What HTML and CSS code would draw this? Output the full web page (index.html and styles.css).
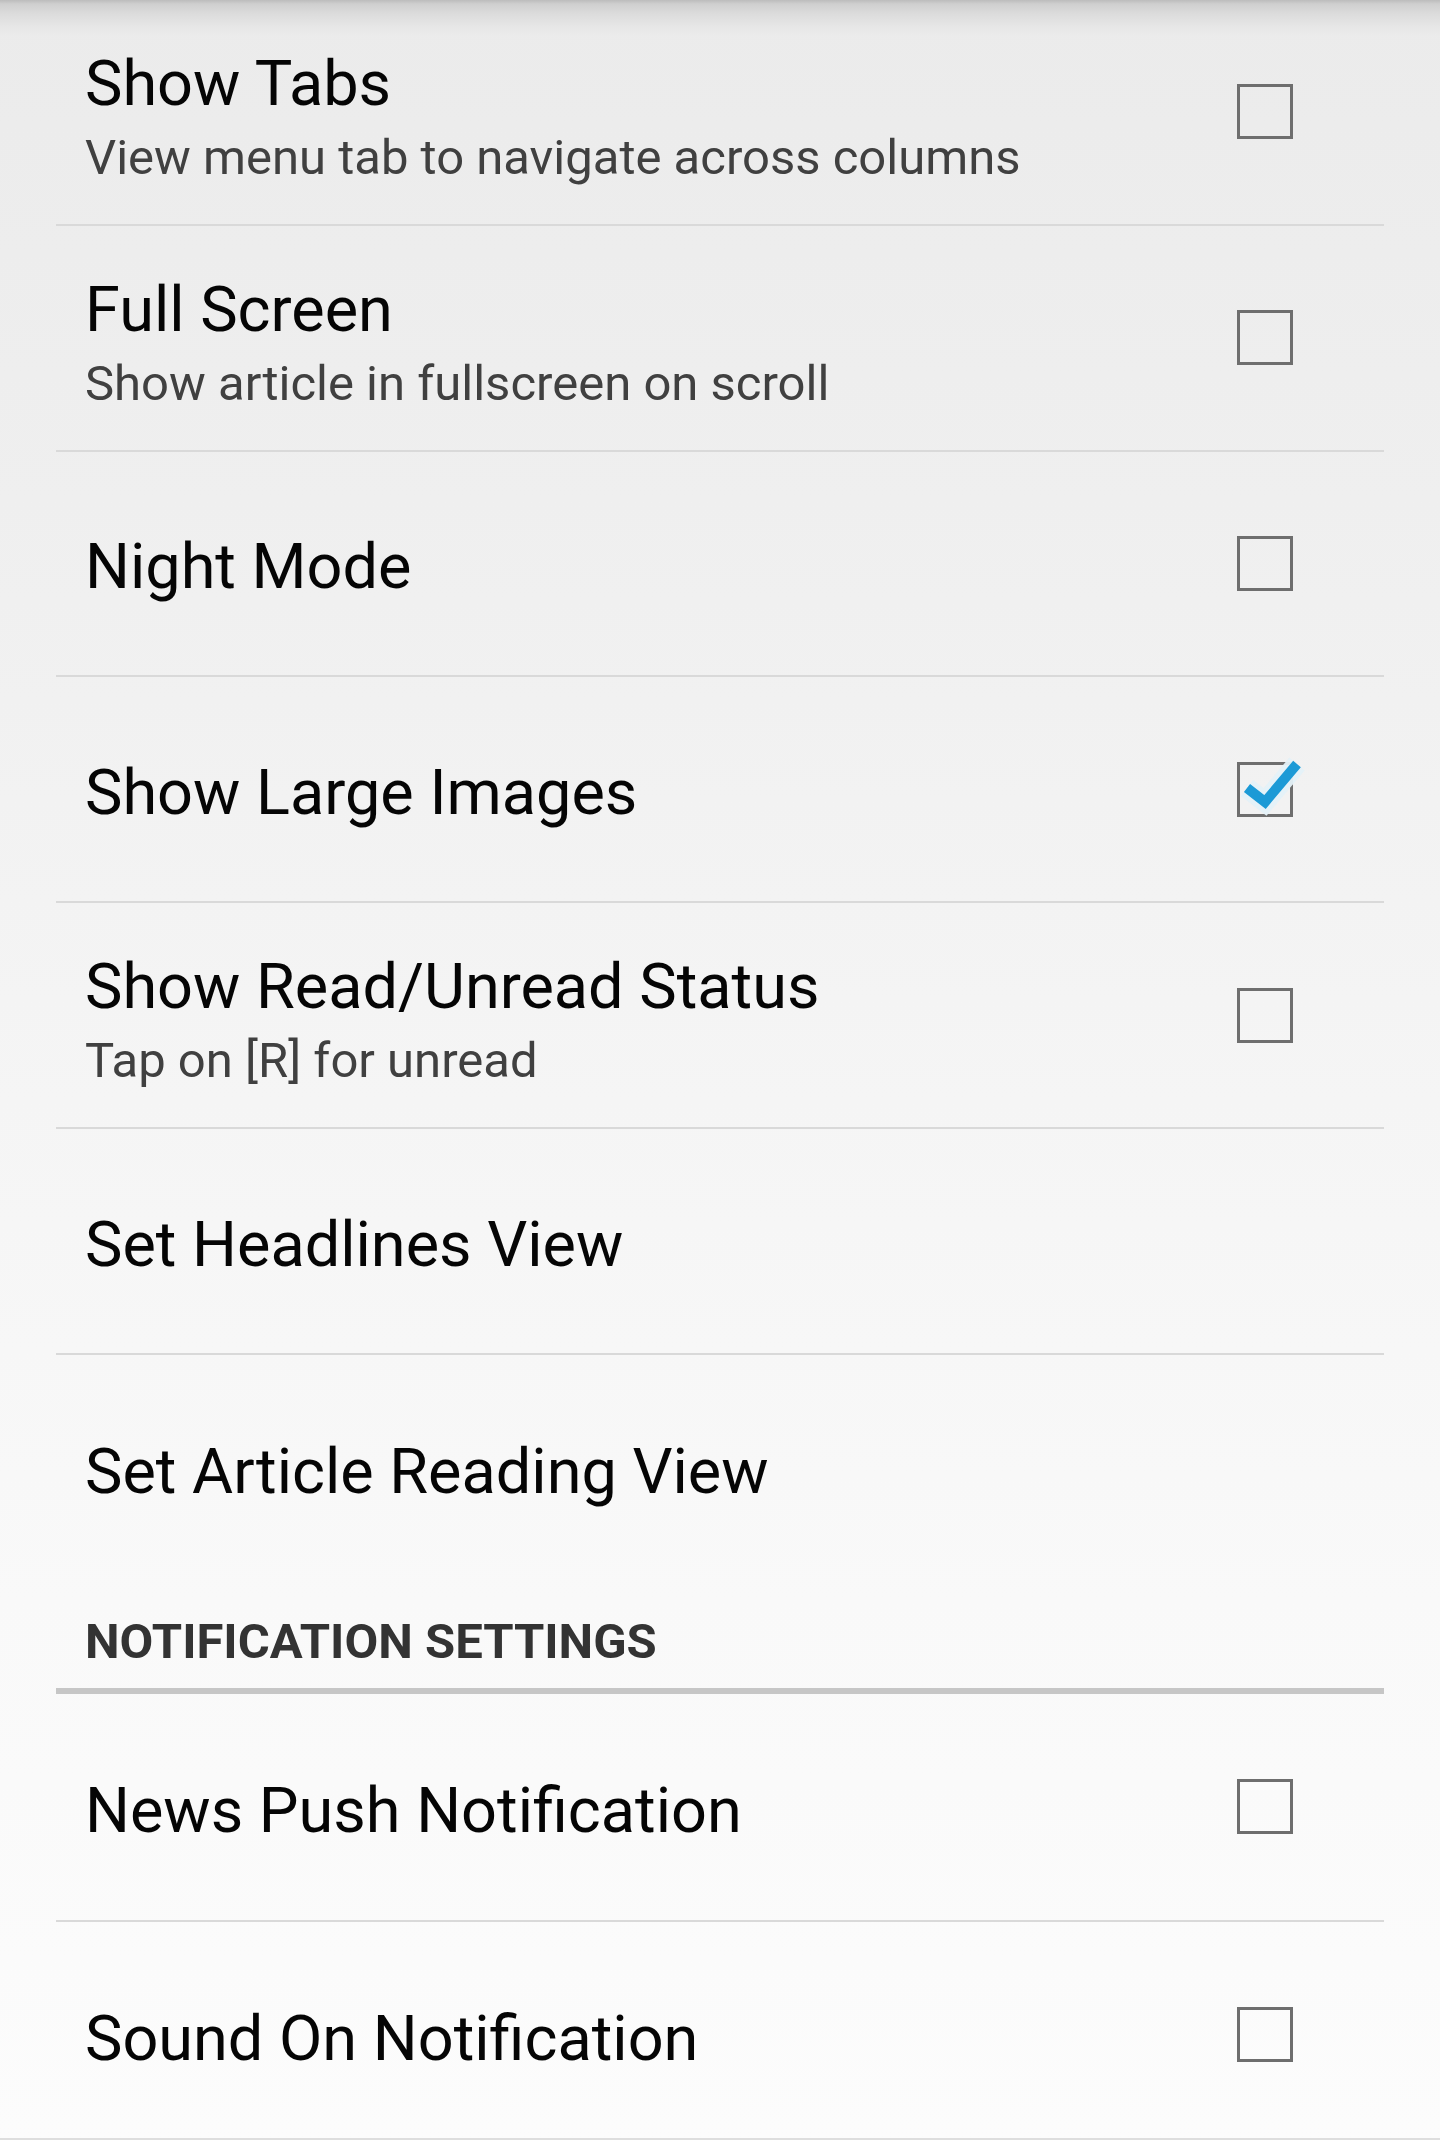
FILE: index.html
```html
<!DOCTYPE html>
<html lang="en">
<head>
<meta charset="utf-8">
<title>Settings</title>
<link rel="stylesheet" href="styles.css">
</head>
<body>
<div class="screen">
  <div class="top-shadow"></div>
  <ul class="list">
    <li class="row">
      <div class="text two">
        <div class="title">Show Tabs</div>
        <div class="summary">View menu tab to navigate across columns</div>
      </div>
      <span class="box"></span>
    </li>
    <li class="row">
      <div class="text two">
        <div class="title">Full Screen</div>
        <div class="summary">Show article in fullscreen on scroll</div>
      </div>
      <span class="box"></span>
    </li>
    <li class="row">
      <div class="text"><div class="title">Night Mode</div></div>
      <span class="box"></span>
    </li>
    <li class="row">
      <div class="text"><div class="title">Show Large Images</div></div>
      <span class="box checked">
        <svg class="tick" width="56" height="56" viewBox="0 0 56 56" aria-hidden="true">
          <polyline class="tick-halo" points="10,26 28,40 60,2"/>
          <polyline class="tick-mark" points="10,26 28,40 60,2"/>
        </svg>
      </span>
    </li>
    <li class="row">
      <div class="text two">
        <div class="title">Show Read/Unread Status</div>
        <div class="summary">Tap on [R] for unread</div>
      </div>
      <span class="box"></span>
    </li>
    <li class="row">
      <div class="text"><div class="title">Set Headlines View</div></div>
    </li>
    <li class="row last">
      <div class="text"><div class="title">Set Article Reading View</div></div>
    </li>
  </ul>
  <div class="category">NOTIFICATION SETTINGS</div>
  <ul class="list notif">
    <li class="row">
      <div class="text"><div class="title">News Push Notification</div></div>
      <span class="box"></span>
    </li>
    <li class="row final">
      <div class="text"><div class="title">Sound On Notification</div></div>
      <span class="box"></span>
    </li>
  </ul>
</div>
</body>
</html>
```
FILE: styles.css
```css
html, body {
  margin: 0;
  padding: 0;
}
body {
  width: 1440px;
  height: 2140px;
  overflow: hidden;
  font-family: Roboto, "Noto Sans", "Liberation Sans", sans-serif;
}
.screen {
  position: relative;
  width: 1440px;
  height: 2140px;
  overflow: hidden;
  background: linear-gradient(to bottom, #ebebeb 0px, #efefef 500px, #f5f5f5 1100px, #f9f9f9 1600px, #fcfcfc 2140px);
}
.top-shadow {
  position: absolute;
  left: 0;
  top: 0;
  width: 100%;
  height: 36px;
  background: linear-gradient(to bottom, #bcbcbc 0px, #cfcfcf 4px, #dcdcdc 14px, #e6e6e6 26px, rgba(235,235,235,0) 36px);
  pointer-events: none;
}
.list {
  list-style: none;
  margin: 0 56px;
  padding: 0;
}
.row {
  display: flex;
  align-items: center;
  justify-content: space-between;
  height: 223.8px;
  border-bottom: 2px solid #d9d9d9;
  padding: 0 91px 0 29px;
}
.row.last {
  border-bottom: none;
  height: 225.8px;
}
.notif .row {
  height: 226px;
}
.notif .row.final {
  height: 226px;
  border-bottom: none;
}
.text {
  display: flex;
  flex-direction: column;
  padding-top: 8px;
}
.text.two {
  padding-top: 16px;
}
.title {
  font-size: 63px;
  line-height: 76px;
  color: #050505;
  white-space: nowrap;
}
.summary {
  font-size: 49px;
  line-height: 72px;
  color: #404040;
  white-space: nowrap;
}
.box {
  position: relative;
  flex: none;
  box-sizing: border-box;
  width: 56px;
  height: 55px;
  border: 3px solid #6e6e6e;
}
.tick {
  position: absolute;
  left: -3px;
  top: -3px;
  overflow: visible;
}
.tick-halo {
  fill: none;
  stroke: #e4f1f8;
  stroke-width: 20;
  stroke-linejoin: miter;
  stroke-linecap: butt;
  opacity: 0.95;
}
.tick-mark {
  fill: none;
  stroke: #1c9ad6;
  stroke-width: 10;
  stroke-linejoin: miter;
  stroke-linecap: butt;
}
.category {
  margin: 0 56px;
  height: 113px;
  box-sizing: border-box;
  padding: 32px 0 0 29px;
  border-bottom: 6px solid #c6c6c6;
  font-size: 49px;
  line-height: 58px;
  font-weight: bold;
  color: #333333;
  text-transform: uppercase;
}
.screen::after {
  content: "";
  position: absolute;
  left: 0;
  bottom: 0;
  width: 100%;
  height: 2px;
  background: #dedede;
}
```
